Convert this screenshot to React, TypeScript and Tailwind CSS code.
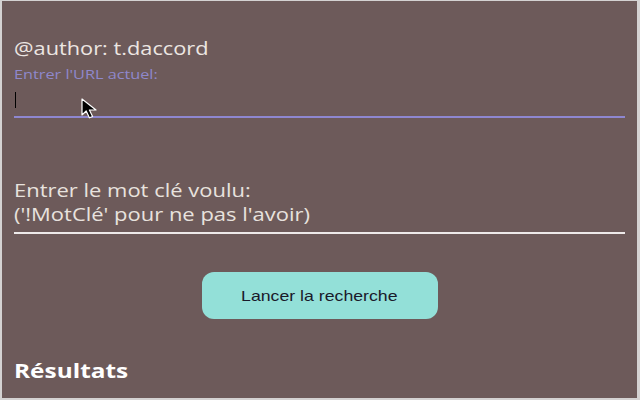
import React from "react";

function PointerCursor() {
  return (
    <svg
      width="17"
      height="22"
      viewBox="0 0 17 22"
      className="absolute left-[79px] top-[97px]"
    >
      <path
        d="M1 1 L1 17 L5.2 13 L8.4 19.8 L11.6 18.5 L8.4 12 L15 12 Z"
        fill="#000"
        stroke="#fff"
        strokeWidth="1.2"
        strokeLinejoin="round"
      />
    </svg>
  );
}

export default function App() {
  return (
    <div className="w-[640px] h-[400px] bg-[#d4d2d2] pl-[2px] pt-[1px] pr-[3px] pb-[2px]">
      <div className="relative h-full bg-[#6d5a5a] px-3 font-['Open_Sans',sans-serif] overflow-hidden">
        <p className="pt-[35px] text-[18px] leading-6 text-[#ece6e2] origin-left scale-x-[1.21]">
          @author: t.daccord
        </p>

        {/* URL field, focused */}
        <div className="mt-[6px]">
          <label className="block text-[13px] leading-4 text-[#8f88cc] origin-left scale-x-[1.25]">
            Entrer l'URL actuel:
          </label>
          <div className="h-[36px] border-b-2 border-[#8e87d0] pt-[10px]">
            <div className="ml-[1px] w-[1px] h-[16px] bg-black" />
          </div>
        </div>
        <PointerCursor />

        {/* keyword field */}
        <div className="mt-[60px]">
          <label className="block text-[18px] leading-6 text-[#e8e2de] origin-left scale-x-[1.22]">
            Entrer le mot clé voulu:
            <br />
            ('!MotClé' pour ne pas l'avoir)
          </label>
          <div className="h-[8px] border-b-2 border-[#eeeaea]" />
        </div>

        <div className="flex justify-center mt-[38px]">
          <button className="w-[236px] h-[47px] pt-[2px] rounded-xl bg-[#93e0d8] text-[15px] text-[#1a1a2a] font-['Liberation_Sans',sans-serif]">
            <span className="inline-block scale-x-[1.18]">Lancer la recherche</span>
          </button>
        </div>

        <h2 className="mt-[38px] text-[20px] leading-7 font-bold text-white origin-left scale-x-[1.22]">
          Résultats
        </h2>
      </div>
    </div>
  );
}
